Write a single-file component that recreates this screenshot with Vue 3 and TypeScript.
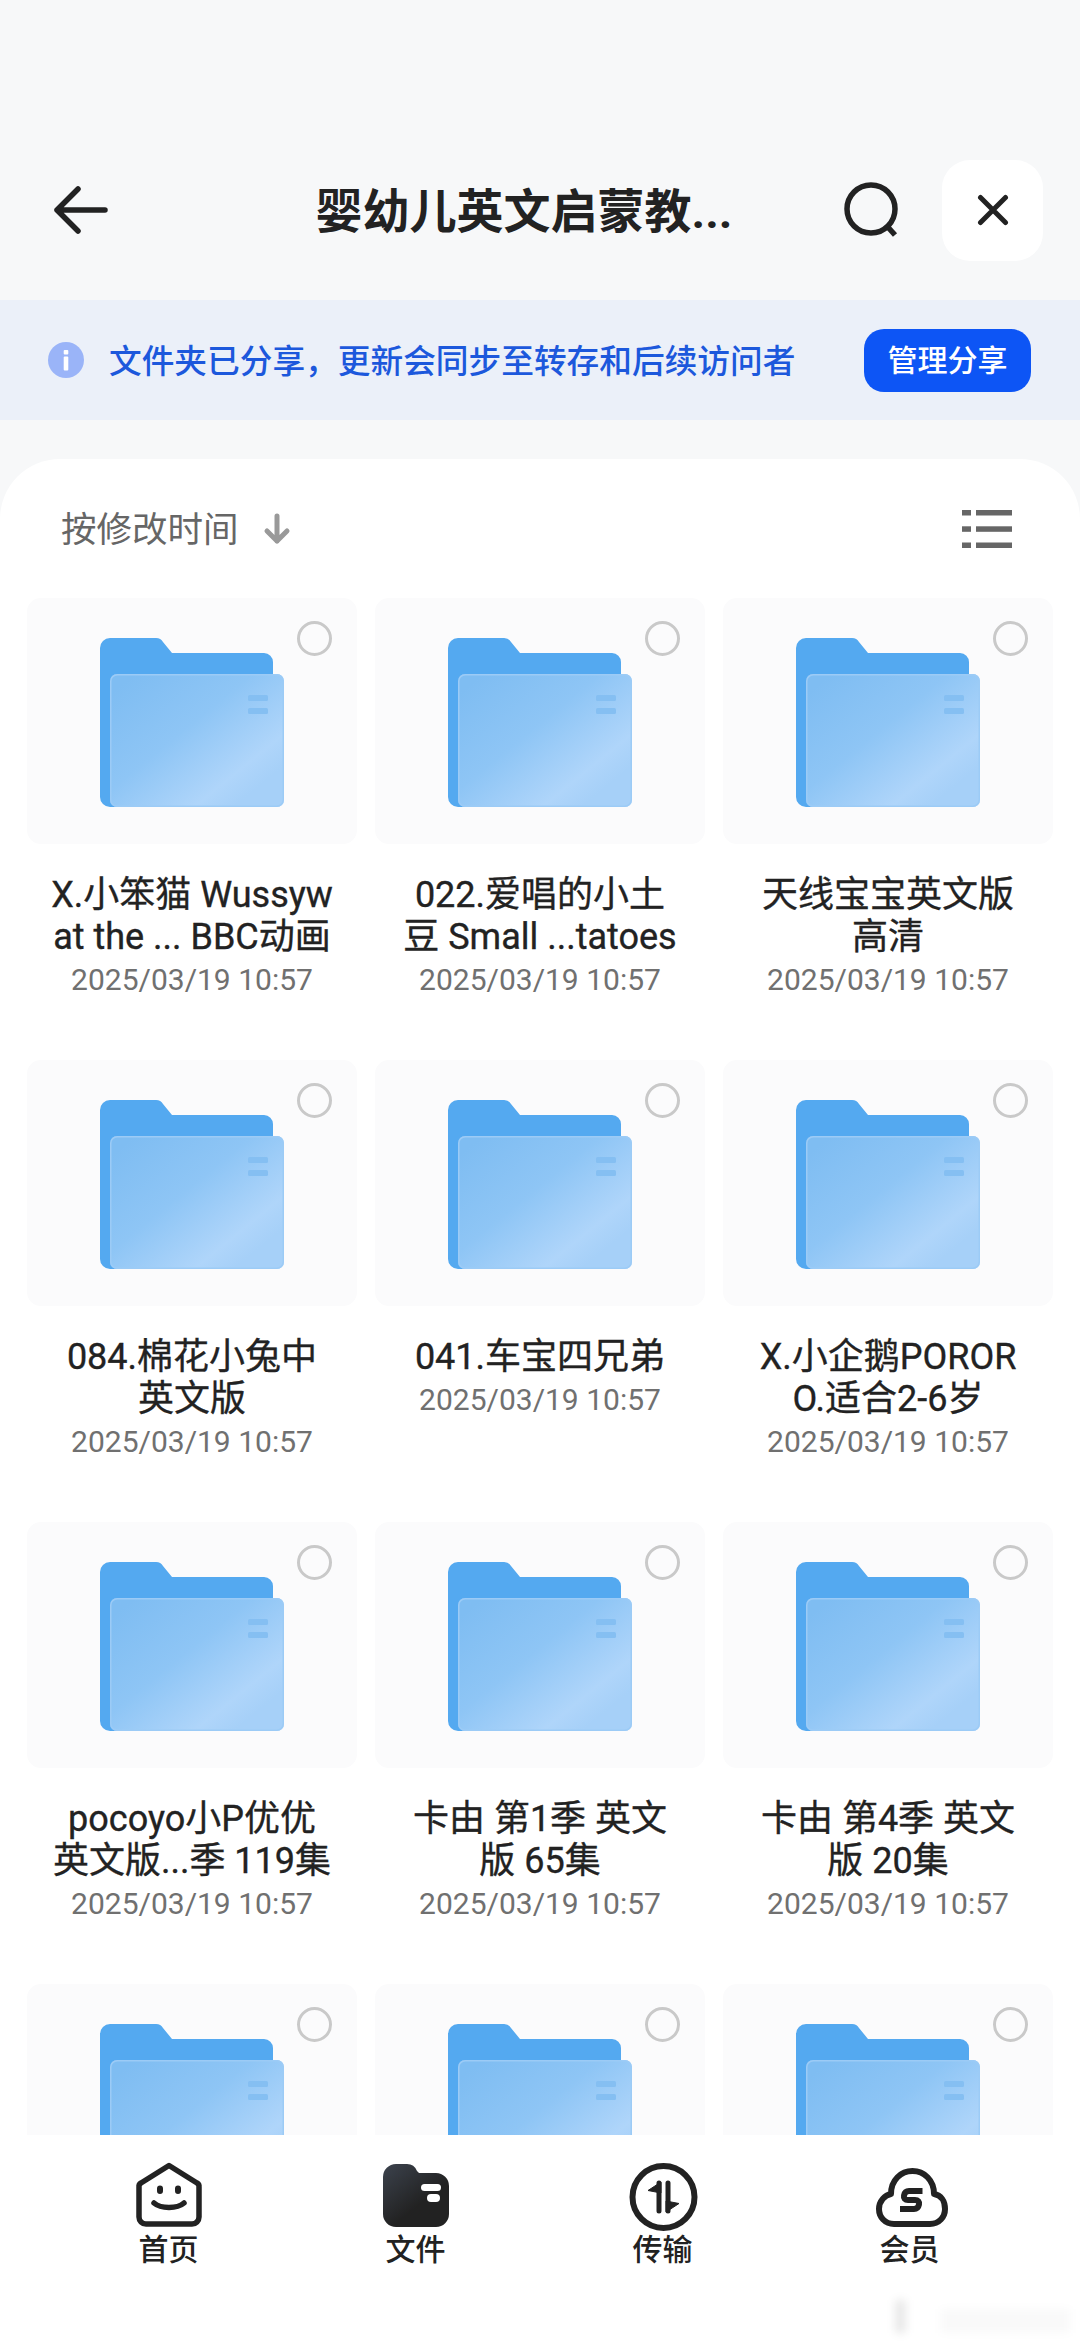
<script setup lang="ts">
interface FolderItem {
  lines: string[]
}

// the last row runs under the tab bar, its names are not visible
const folders: FolderItem[] = [
  { lines: ['X.小笨猫 Wussyw', 'at the ... BBC动画'] },
  { lines: ['022.爱唱的小土', '豆 Small ...tatoes'] },
  { lines: ['天线宝宝英文版', '高清'] },
  { lines: ['084.棉花小兔中', '英文版'] },
  { lines: ['041.车宝四兄弟'] },
  { lines: ['X.小企鹅POROR', 'O.适合2-6岁'] },
  { lines: ['pocoyo小P优优', '英文版...季 119集'] },
  { lines: ['卡由 第1季 英文', '版 65集'] },
  { lines: ['卡由 第4季 英文', '版 20集'] },
  { lines: [] },
  { lines: [] },
  { lines: [] },
]

const tabs = ['首页', '文件', '传输', '会员']
</script>

<template>
  <div class="page">
    <header class="topbar">
      <svg class="back" viewBox="0 0 54 48" fill="none" stroke="#222" stroke-width="5.5" stroke-linecap="round" stroke-linejoin="round">
        <path d="M3 24H51M24 3L3 24L24 45" />
      </svg>
      <h1 class="title">婴幼儿英文启蒙教...</h1>
      <svg class="search" viewBox="0 0 56 56" fill="none" stroke="#222" stroke-width="5.5">
        <circle cx="27" cy="27" r="24" />
        <path d="M42 43L51 53" />
      </svg>
      <button class="close">
        <svg viewBox="0 0 32 32" fill="none" stroke="#222" stroke-width="5" stroke-linecap="round">
          <path d="M3.5 3.5L28.5 28.5M28.5 3.5L3.5 28.5" />
        </svg>
      </button>
    </header>

    <div class="banner">
      <svg class="info" viewBox="0 0 36 36">
        <circle cx="18" cy="18" r="18" fill="#9ab4f8" />
        <rect x="15.7" y="8" width="4.6" height="4.5" rx="1" fill="#fff" />
        <rect x="15.7" y="14.5" width="4.6" height="14" rx="1" fill="#fff" />
      </svg>
      <span class="banner-text">文件夹已分享，更新会同步至转存和后续访问者</span>
      <button class="manage">管理分享</button>
    </div>

    <main class="sheet">
      <div class="sort-row">
        <span class="sort-label">按修改时间</span>
        <svg class="sort-arrow" viewBox="0 0 28 32" fill="none" stroke="#999" stroke-width="5" stroke-linecap="round" stroke-linejoin="round">
          <path d="M14 3V28M4 18L14 28L24 18" />
        </svg>
        <svg class="list-icon" viewBox="0 0 50 38" fill="#666">
          <rect x="0" y="0" width="9" height="5.5" />
          <rect x="14" y="0" width="36" height="5.5" />
          <rect x="0" y="16.3" width="9" height="5.5" />
          <rect x="14" y="16.3" width="36" height="5.5" />
          <rect x="0" y="32.5" width="9" height="5.5" />
          <rect x="14" y="32.5" width="36" height="5.5" />
        </svg>
      </div>

      <div class="grid">
        <div v-for="(item, i) in folders" :key="i" class="item">
          <div class="thumb">
            <svg class="folder" viewBox="0 0 184 170">
              <defs>
                <linearGradient :id="`front-${i}`" x1="0.05" y1="0.1" x2="0.85" y2="0.85">
                  <stop offset="0" stop-color="#7fbdf2" />
                  <stop offset="0.45" stop-color="#8ec5f5" />
                  <stop offset="0.85" stop-color="#afd5fa" />
                  <stop offset="1" stop-color="#a6d0f8" />
                </linearGradient>
              </defs>
              <path d="M0 10a10 10 0 0 1 10-10H56a8 8 0 0 1 7 4L72 15H164a9 9 0 0 1 9 9V169H10a10 10 0 0 1-10-10Z" fill="#54a9f0" />
              <rect x="10" y="36" width="174" height="133" rx="7" :fill="`url(#front-${i})`" />
              <rect x="10.75" y="36.75" width="172.5" height="131.5" rx="6.5" fill="none" stroke="#9ccbf6" stroke-width="1.5" />
              <rect x="148" y="57" width="20" height="6" rx="1.5" fill="#85bff2" />
              <rect x="148" y="70" width="20" height="6" rx="1.5" fill="#85bff2" />
            </svg>
            <span class="radio" />
          </div>
          <template v-if="item.lines.length">
            <div class="name">
              <div v-for="line in item.lines" :key="line">{{ line }}</div>
            </div>
            <div class="date">2025/03/19 10:57</div>
          </template>
        </div>
      </div>
    </main>

    <nav class="tabbar">
      <div v-for="(tab, i) in tabs" :key="tab" class="tab">
        <svg v-if="i === 0" class="tab-icon" viewBox="0 0 68 68" fill="none" stroke="#222" stroke-width="5.5" stroke-linecap="round" stroke-linejoin="round">
          <path d="M34 3.5L62 21a4 4 0 0 1 2 4V55a7 7 0 0 1-7 7H11a7 7 0 0 1-7-7V25a4 4 0 0 1 2-4Z" />
          <path d="M19 41C26 47 42 47 49 41" />
          <path d="M25 26.5V29M43 26.5V29" stroke-width="6" />
        </svg>
        <svg v-else-if="i === 1" class="tab-icon" viewBox="0 0 68 68">
          <defs>
            <linearGradient id="tab-file" x1="0.1" y1="0" x2="0.6" y2="0.6">
              <stop offset="0" stop-color="#3a404a" />
              <stop offset="1" stop-color="#222" />
            </linearGradient>
          </defs>
          <path d="M1 15A13 13 0 0 1 14 2H25a11 11 0 0 1 10 7L37 11H54a13 13 0 0 1 13 13V52a13 13 0 0 1-13 13H14A13 13 0 0 1 1 52Z" fill="url(#tab-file)" />
          <rect x="39" y="22" width="20" height="7" rx="3.5" fill="#fff" />
          <rect x="45" y="32" width="13" height="8" rx="4" fill="#fff" />
        </svg>
        <svg v-else-if="i === 2" class="tab-icon overflow" viewBox="0 0 68 68" fill="none">
          <circle cx="34.5" cy="35" r="31" stroke="#222" stroke-width="6" />
          <path d="M30 21V49M39 21V49" stroke="#222" stroke-width="5" stroke-linecap="round" />
          <path d="M32 20L19 28.5L32 31ZM37 50L50 41.5L37 39Z" fill="#222" stroke="#222" stroke-width="1" stroke-linejoin="round" />
        </svg>
        <svg v-else class="tab-icon overflow" viewBox="0 0 68 68" fill="none" stroke="#222" stroke-width="6">
          <path d="M18 62C9 62 3 55 3 47C3 39 9 33 15 32C15 18 25 9 36.5 9C48 9 58 18 58 32C65 33 69 39 69 47C69 55 63 62 54 62Z" stroke-linejoin="round" />
          <path d="M46.5 29H33C30 29 28.5 31 28 33.5C27.5 36 29 38 32 38H39C42 38 43.5 40 43 42.5C42.5 45 41 47 38 47H24" />
        </svg>
        <span class="tab-label">{{ tab }}</span>
      </div>
    </nav>

    <!-- blurred watermark in the corner -->
    <div class="mark">
      <span class="mark-a" />
      <span class="mark-b" />
    </div>
  </div>
</template>

<style scoped>
.page {
  position: relative;
  display: flex;
  flex-direction: column;
  width: 1080px;
  height: 2344px;
  overflow: hidden;
  background: #f7f8f9;
  font-family: Roboto, 'Noto Sans CJK SC', sans-serif;
  color: #222;
}

.topbar {
  display: flex;
  align-items: center;
  height: 300px;
  padding: 120px 37px 0 54px;
  box-sizing: border-box;
}

.back {
  width: 54px;
  height: 48px;
}

.title {
  flex: 1;
  margin: 0 0 5px;
  padding-left: 96px;
  text-align: center;
  font-size: 47px;
  font-weight: 700;
}

.search {
  width: 56px;
  height: 56px;
  margin-right: 42px;
}

.close {
  display: flex;
  align-items: center;
  justify-content: center;
  width: 101px;
  height: 101px;
  padding: 0;
  border: none;
  border-radius: 28px;
  background: #fff;
}

.close svg {
  width: 32px;
  height: 32px;
}

.banner {
  display: flex;
  align-items: center;
  height: 120px;
  padding: 0 49px 0 48px;
  box-sizing: border-box;
  background: #ebf0f9;
}

.info {
  width: 36px;
  height: 36px;
  margin-right: 25px;
}

.banner-text {
  flex: 1;
  padding-bottom: 4px;
  font-size: 32.7px;
  font-weight: 500;
  color: #1c58dc;
}

.manage {
  width: 167px;
  height: 63px;
  padding: 0 0 4px;
  border: none;
  border-radius: 20px;
  background: #0d55f5;
  color: #fff;
  font-family: inherit;
  font-size: 30px;
  font-weight: 500;
}

.sheet {
  flex: 1;
  min-height: 0;
  margin-top: 39px;
  overflow: hidden;
  border-radius: 60px 60px 0 0;
  background: #fff;
}

.sort-row {
  display: flex;
  align-items: center;
  height: 139px;
  padding: 0 68px 0 61px;
  box-sizing: border-box;
}

.sort-label {
  padding-bottom: 4px;
  font-size: 35.5px;
  color: #666;
}

.sort-arrow {
  width: 28px;
  height: 32px;
  margin-left: 24px;
}

.list-icon {
  width: 50px;
  height: 38px;
  margin-left: auto;
}

.grid {
  display: grid;
  grid-template-columns: repeat(3, 330px);
  grid-auto-rows: 462px;
  column-gap: 18px;
  padding-left: 27px;
}

.thumb {
  position: relative;
  display: flex;
  height: 246px;
  padding: 40px 0 0 73px;
  box-sizing: border-box;
  border-radius: 14px;
  background: #fbfbfc;
}

.folder {
  width: 184px;
  height: 170px;
}

.radio {
  position: absolute;
  top: 23px;
  right: 25px;
  width: 35px;
  height: 35px;
  box-sizing: border-box;
  border: 3.5px solid #c9c9c9;
  border-radius: 50%;
}

.name {
  margin-top: 30px;
  text-align: center;
  font-size: 36px;
  font-weight: 400;
  line-height: 42px;
  color: #222;
  -webkit-text-stroke: 0.35px #222;
}

.date {
  margin-top: 4px;
  text-align: center;
  font-size: 30px;
  line-height: 36px;
  color: #707070;
}

.tabbar {
  position: relative;
  z-index: 1;
  display: flex;
  height: 209px;
  padding: 27px 45px 0;
  box-sizing: border-box;
  background: #fff;
}

.tab {
  display: flex;
  flex-direction: column;
  align-items: center;
  width: 247px;
}

.tab-icon {
  width: 68px;
  height: 68px;
}

.tab-icon.overflow {
  overflow: visible;
}

.tab-label {
  margin-top: 2px;
  font-size: 30px;
  font-weight: 500;
  line-height: 36px;
  color: #222;
}

.mark {
  position: absolute;
  z-index: 2;
  right: 10px;
  bottom: 11px;
  display: flex;
  align-items: flex-end;
  width: 175px;
  height: 35px;
  gap: 35px;
  filter: blur(4px);
}

.mark-a {
  width: 11px;
  height: 33px;
  background: rgba(0, 0, 0, 0.09);
}

.mark-b {
  flex: 1;
  height: 24px;
  background: rgba(0, 0, 0, 0.025);
}
</style>

<style>
body {
  background: #fff;
}
</style>
